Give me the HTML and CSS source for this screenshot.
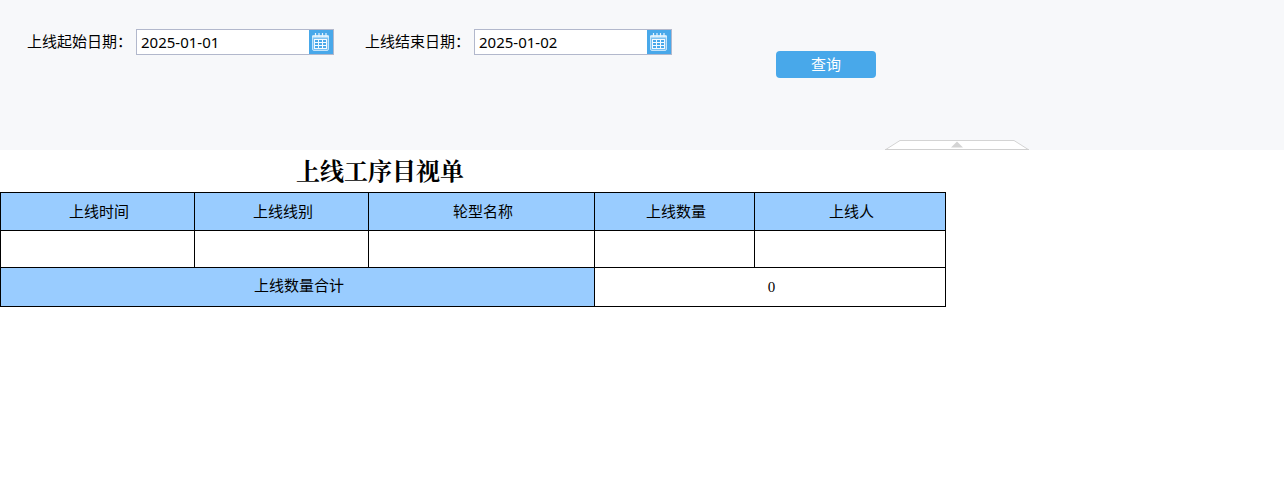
FILE: index.html
```html
<!DOCTYPE html>
<html lang="zh-CN">
<head>
<meta charset="utf-8">
<title>上线工序目视单</title>
<link rel="stylesheet" href="styles.css">
</head>
<body>
<svg class="sprite" aria-hidden="true">
  <symbol id="calendar" viewBox="0 0 24 24">
    <rect x="3.5" y="5.5" width="16" height="15" rx="1.5" fill="#7cc1f1" stroke="#c4e4fa"/>
    <path d="M3 6.5h17" stroke="#d8eefc" stroke-width="2"/>
    <path d="M6.5 3v4M10 3v4M13.5 3v4M17 3v4" stroke="#e6f4fd" stroke-width="1.2"/>
    <rect x="5" y="9" width="13" height="10" fill="#f4faff"/>
    <path d="M6 10h3v2H6zM10 10h3v2h-3zM14 10h3v2h-3zM6 13h3v2H6zM10 13h3v2h-3zM14 13h3v2h-3zM6 16h3v2H6zM10 16h3v2h-3zM14 16h3v2h-3z" fill="#48a8ea"/>
  </symbol>
</svg>
<form class="query">
  <div class="fields">
    <div class="field">
      <label for="start">上线起始日期：</label>
      <div class="date">
        <input id="start" type="text" value="2025-01-01">
        <button class="pick" type="button" aria-label="选择上线起始日期"><svg><use href="#calendar"/></svg></button>
      </div>
    </div>
    <div class="field">
      <label for="end">上线结束日期：</label>
      <div class="date">
        <input id="end" type="text" value="2025-01-02">
        <button class="pick" type="button" aria-label="选择上线结束日期"><svg><use href="#calendar"/></svg></button>
      </div>
    </div>
  </div>
  <button class="submit" type="button">查询</button>
  <button class="collapse" type="button" aria-label="收起">
    <svg viewBox="0 0 144 10">
      <path d="M0 10L15 .5H129L144 10z" fill="#fff" stroke="#d4d4d4"/>
      <path d="M0 9.5H144" stroke="#d0d0d0"/>
      <path d="M66 7.5L72 1.5l6 6z" fill="#d4d4d4"/>
    </svg>
  </button>
</form>
<main class="report">
  <h1>上线工序目视单</h1>
  <table>
    <colgroup><col class="c-time"><col class="c-line"><col class="c-wheel"><col class="c-count"><col class="c-person"></colgroup>
    <thead>
      <tr><th>上线时间</th><th>上线线别</th><th>轮型名称</th><th>上线数量</th><th>上线人</th></tr>
    </thead>
    <tbody>
      <tr><td></td><td></td><td></td><td></td><td></td></tr>
    </tbody>
    <tfoot>
      <tr><th colspan="3">上线数量合计</th><td class="total" colspan="2">0</td></tr>
    </tfoot>
  </table>
</main>
</body>
</html>
```
FILE: styles.css
```css
* { box-sizing: border-box; }
body {
  margin: 0;
  background: #fff;
  color: #000;
  font: 15px/20px "Liberation Sans", "Noto Sans CJK SC", sans-serif;
}
button { border: 0; padding: 0; cursor: pointer; }
.sprite { display: none; }
.query {
  position: relative;
  display: flex;
  align-items: flex-start;
  gap: 104px;
  min-height: 150px;
  padding: 29px 27px;
  background: #f7f8fa;
}
.fields { display: flex; gap: 31px; }
.field { display: flex; align-items: center; gap: 4px; }
.field label { white-space: nowrap; }
.date {
  display: flex;
  width: 198px;
  height: 26px;
  border: 1px solid #b2b8cc;
  background: #fff;
}
.date input {
  flex: 1;
  min-width: 0;
  border: 0;
  padding: 0 4px;
  background: transparent;
  color: #000;
  font: 15px/20px "Noto Sans", sans-serif;
}
.pick { width: 24px; background: #48a8ea; }
.pick svg { display: block; width: 24px; height: 24px; }
.submit {
  width: 100px;
  height: 27px;
  margin-top: 22px;
  border-radius: 4px;
  background: #48a8ea;
  color: #fff;
  font: inherit;
}
.collapse {
  position: absolute;
  left: 885px;
  bottom: 0;
  width: 144px;
  height: 10px;
  background: none;
}
.collapse svg { display: block; width: 100%; height: 100%; }
.report { max-width: 946px; }
h1 {
  margin: 0;
  padding: 4px 186px 6px 0;
  text-align: center;
  font: bold 24px/32px "Noto Serif CJK SC", "Noto Sans CJK SC", serif;
}
table { width: 100%; table-layout: fixed; border-collapse: collapse; }
th, td {
  height: 38px;
  border: 1px solid #000;
  padding: 0 0 0 3px;
  text-align: center;
  font-weight: normal;
}
th { background: #9cf; }
tbody td { height: 37px; }
tfoot th, tfoot td { height: 39px; }
tfoot th { padding-bottom: 2px; }
.total { font-family: "Liberation Serif", serif; }
.c-time { width: 194px; }
.c-line { width: 174px; }
.c-wheel { width: 226px; }
.c-count { width: 160px; }
.c-person { width: 191px; }
```
